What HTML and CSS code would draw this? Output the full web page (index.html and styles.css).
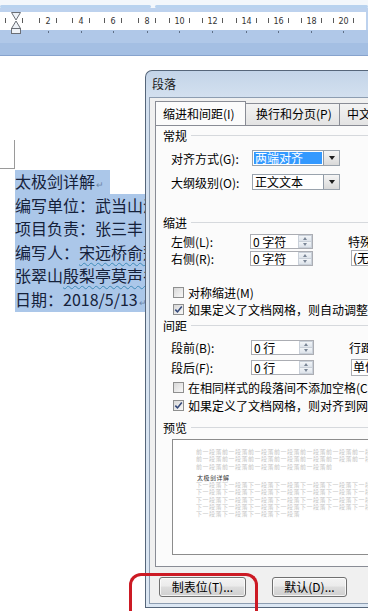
FILE: index.html
```html
<!DOCTYPE html>
<html lang="zh-CN">
<head>
<meta charset="utf-8">
<title>段落</title>
<link rel="stylesheet" href="styles.css">
</head>
<body>
<header class="ruler-bar">
  <div class="ruler-top"><span class="seg left"></span><span class="seg right"></span></div>
  <svg class="ruler" width="368" height="48" viewBox="0 8 368 48" xmlns="http://www.w3.org/2000/svg">
    <rect x="0" y="8" width="368" height="4" fill="#bdd2ee"/>
    <rect x="0" y="30" width="368" height="13" fill="#b0c8e8"/>
    <rect x="0" y="43" width="368" height="12" fill="#a4bfe3"/>
    <line x1="0" y1="55.5" x2="368" y2="55.5" stroke="#87a3cd"/>
    <rect x="0" y="12" width="366" height="18" fill="#ffffff"/>
    <rect x="366" y="12" width="2" height="18" fill="#bdd2ee"/>
    <g stroke="#5a5a5a" stroke-width="1">
      <line x1="5.5" y1="18" x2="5.5" y2="23"/>
      <line x1="22.5" y1="18" x2="22.5" y2="23"/>
      <line x1="39.5" y1="18" x2="39.5" y2="23"/><line x1="56.5" y1="18" x2="56.5" y2="23"/>
      <line x1="72.5" y1="18" x2="72.5" y2="23"/><line x1="89.5" y1="18" x2="89.5" y2="23"/>
      <line x1="104.5" y1="18" x2="104.5" y2="23"/><line x1="121.5" y1="18" x2="121.5" y2="23"/>
      <line x1="138.5" y1="18" x2="138.5" y2="23"/><line x1="155.5" y1="18" x2="155.5" y2="23"/>
      <line x1="169.5" y1="18" x2="169.5" y2="23"/><line x1="189.5" y1="18" x2="189.5" y2="23"/>
      <line x1="202.5" y1="18" x2="202.5" y2="23"/><line x1="222.5" y1="18" x2="222.5" y2="23"/>
      <line x1="236.5" y1="18" x2="236.5" y2="23"/><line x1="256.5" y1="18" x2="256.5" y2="23"/>
      <line x1="268.5" y1="18" x2="268.5" y2="23"/><line x1="288.5" y1="18" x2="288.5" y2="23"/>
      <line x1="301.5" y1="18" x2="301.5" y2="23"/><line x1="321.5" y1="18" x2="321.5" y2="23"/>
      <line x1="333.5" y1="18" x2="333.5" y2="23"/><line x1="353.5" y1="18" x2="353.5" y2="23"/>
    </g>
    <g stroke="#5f6f86" stroke-width="1">
      <line x1="48.5" y1="31" x2="48.5" y2="33"/><line x1="81.5" y1="31" x2="81.5" y2="33"/>
      <line x1="113.5" y1="31" x2="113.5" y2="33"/><line x1="147.5" y1="31" x2="147.5" y2="33"/>
      <line x1="179.5" y1="31" x2="179.5" y2="33"/><line x1="212.5" y1="31" x2="212.5" y2="33"/>
      <line x1="246.5" y1="31" x2="246.5" y2="33"/><line x1="278.5" y1="31" x2="278.5" y2="33"/>
      <line x1="311.5" y1="31" x2="311.5" y2="33"/><line x1="343.5" y1="31" x2="343.5" y2="33"/>
    </g>
    <g class="ruler-num" fill="#333" font-size="8" text-anchor="middle">
      <text x="48" y="23.5">2</text><text x="81" y="23.5">4</text><text x="113" y="23.5">6</text>
      <text x="147" y="23.5">8</text><text x="179.5" y="23.5">10</text><text x="212.5" y="23.5">12</text>
      <text x="246.5" y="23.5">14</text><text x="278.5" y="23.5">16</text><text x="311.5" y="23.5">18</text>
      <text x="343.5" y="23.5">20</text>
    </g>
    <g fill="#eef2f7" stroke="#6b6f76" stroke-width="1">
      <path d="M11.5 12.5 H20.5 L16 20 Z"/>
      <path d="M16 21 L20.5 28.5 H11.5 Z"/>
      <rect x="11.5" y="28.5" width="9" height="5"/>
    </g>
  </svg>
</header>

<main class="page">
  <div class="text-block">
    <div class="line"><span>太极剑详解</span><span class="pmark">↵</span></div>
    <div class="line">编写单位：武当山派</div>
    <div class="line">项目负责：张三丰</div>
    <div class="line">编写人：<span class="squiggle">宋远桥俞莲舟</span></div>
    <div class="line">张翠山<span class="squiggle">殷梨亭莫声谷</span></div>
    <div class="line">日期：2018/5/13<span class="pmark">↵</span></div>
  </div>
</main>

<section class="dialog">
  <div class="title">段落</div>
  <div class="client">
    <div class="tabs">
      <div class="tab active">缩进和间距(I)</div>
      <div class="tab second">换行和分页(P)</div>
      <div class="tab third">中文版式(H)</div>
    </div>
    <div class="panel">
      <div class="group-head">常规</div>
      <div class="field gap-6">
        <span class="label wide">对齐方式(G):</span>
        <div class="select"><span class="value selected">两端对齐</span><span class="arrow"></span></div>
      </div>
      <div class="field gap-8">
        <span class="label wide">大纲级别(O):</span>
        <div class="select"><span class="value">正文文本</span><span class="arrow"></span></div>
      </div>

      <div class="group-head gap-23">缩进</div>
      <div class="field gap-2">
        <span class="label narrow">左侧(L):</span>
        <div class="spin"><span class="value">0 字符</span><span class="btns"><i class="up"></i><i class="down"></i></span></div>
        <span class="side-label">特殊格式(S):</span>
      </div>
      <div class="field gap-1">
        <span class="label narrow">右侧(R):</span>
        <div class="spin"><span class="value">0 字符</span><span class="btns"><i class="up"></i><i class="down"></i></span></div>
        <div class="side-select"><span class="value">(无)</span></div>
      </div>

      <div class="check gap-18"><span class="box"></span>对称缩进(M)</div>
      <div class="check gap-1"><span class="box checked"><svg width="9" height="9" viewBox="0 0 9 9"><path d="M1.3 4.6 L3.5 6.9 L7.8 1.6" fill="none" stroke="#34497a" stroke-width="1.6"/></svg></span>如果定义了文档网格，则自动调整右缩进(D)</div>

      <div class="group-head short">间距</div>
      <div class="field gap-6">
        <span class="label">段前(B):</span>
        <div class="spin"><span class="value">0 行</span><span class="btns"><i class="up"></i><i class="down"></i></span></div>
        <span class="side-label">行距(N):</span>
      </div>
      <div class="field gap-4">
        <span class="label">段后(F):</span>
        <div class="spin"><span class="value">0 行</span><span class="btns"><i class="up"></i><i class="down"></i></span></div>
        <div class="side-select tall"><span class="value">单倍行距</span></div>
      </div>

      <div class="check gap-4"><span class="box"></span>在相同样式的段落间不添加空格(C)</div>
      <div class="check gap-2"><span class="box checked"><svg width="9" height="9" viewBox="0 0 9 9"><path d="M1.3 4.6 L3.5 6.9 L7.8 1.6" fill="none" stroke="#34497a" stroke-width="1.6"/></svg></span>如果定义了文档网格，则对齐到网格(W)</div>

      <div class="group-head gap-5">预览</div>
      <div class="preview">
        <div class="pv-line">前一段落前一段落前一段落前一段落前一段落前一段落前一段落前一段落</div>
        <div class="pv-line">前一段落前一段落前一段落前一段落前一段落前一段落前一段落前一段落</div>
        <div class="pv-line">前一段落前一段落前一段落前一段落前一段落前</div>
        <div class="pv-line current">太极剑详解</div>
        <div class="pv-line">下一段落下一段落下一段落下一段落下一段落下一段落下一段落下一段落</div>
        <div class="pv-line">下一段落下一段落下一段落下一段落下一段落下一段落下一段落下一段落</div>
        <div class="pv-line">下一段落下一段落下一段落下一段落下一段落下一段落下一段落下一段落</div>
        <div class="pv-line">下一段落下一段落下一段落下一段落下一段落下一段落下一段落下一段落</div>
        <div class="pv-line">下一段落下一段落下一段落下一段落</div>
      </div>
    </div>
    <div class="actions">
      <button class="btn tabs-btn">制表位(T)...</button>
      <button class="btn default-btn">默认(D)...</button>
      <button class="btn ok-btn">确定</button>
    </div>
  </div>
</section>

<div class="annotation"></div>
</body>
</html>
```

FILE: styles.css
```css
body {
  margin: 0;
  width: 368px;
  height: 611px;
  overflow: hidden;
  position: relative;
  background: #ffffff;
  font-family: "Noto Sans CJK SC", "Noto Sans", sans-serif;
}

.ruler-bar {
  height: 56px;
  background: #f3f7fb;
}

.ruler-top {
  height: 8px;
  box-sizing: border-box;
  padding-top: 5px;
  display: flex;
  gap: 4px;
}

.ruler-top .seg {
  height: 3px;
  border-radius: 1.5px;
  background: #b9d3ef;
}

.ruler-top .left {
  width: 151px;
}

.ruler-top .right {
  flex: 1;
}

.ruler {
  display: block;
}

.ruler-num {
  font-family: "DejaVu Sans", "Liberation Sans", sans-serif;
}

/* document page */
.page {
  padding: 114px 0 0 15px;
  width: 130px;
  overflow: hidden;
}

.text-block {
  position: relative;
}

.text-block::before {
  content: "";
  position: absolute;
  left: -16px;
  top: -30px;
  width: 15px;
  height: 28px;
  border-right: 1px solid #9a9a9a;
  border-bottom: 1px solid #9a9a9a;
}

.line {
  width: max-content;
  height: 23.6px;
  line-height: 23.6px;
  font-size: 16px;
  color: #15213a;
  background: #abc7e9;
  white-space: nowrap;
  padding-right: 6px;
}

.pmark {
  font-size: 9px;
  color: #6d86a8;
  margin-left: 1px;
}

.squiggle {
  text-decoration: underline wavy #3f8bb8;
  text-decoration-thickness: 1px;
  text-underline-offset: 3px;
}

/* dialog window */
.dialog {
  position: absolute;
  left: 145px;
  top: 70px;
  width: 223px;
  height: 538px;
  box-sizing: border-box;
  border: 1px solid #56667a;
  border-right: none;
  border-radius: 7px 0 0 0;
  padding: 0 0 3px 3px;
  background: linear-gradient(#c3d4e8, #d3e0ef 26px, #dce7f3);
  display: flex;
  flex-direction: column;
  overflow: hidden;
  font-size: 12px;
  color: #000;
}

.title {
  height: 26px;
  line-height: 26px;
  padding-left: 3px;
  color: #1b1b1b;
  flex: none;
}

.client {
  flex: 1;
  min-width: 0;
  background: #f0f0f0;
  border: 1px solid #8d9db1;
  border-right: none;
  padding: 3px 0 0 5px;
  display: flex;
  flex-direction: column;
  overflow: hidden;
}

.tabs {
  display: flex;
  height: 24px;
  position: relative;
  z-index: 1;
  flex: none;
  overflow: hidden;
}

.tab {
  height: 22px;
  margin-top: 2px;
  box-sizing: border-box;
  border: 1px solid #898c95;
  border-left: none;
  border-bottom: none;
  background: linear-gradient(#f3f3f3, #e3e3e3);
  line-height: 20px;
  white-space: nowrap;
  flex: none;
  overflow: hidden;
}

.tab.active {
  width: 91px;
  height: 25px;
  margin-top: 0;
  border-left: 1px solid #898c95;
  background: #fbfbfb;
  line-height: 24px;
  padding-left: 7px;
}

.tab.second {
  width: 94px;
  padding-left: 10px;
}

.tab.third {
  width: 60px;
  padding-left: 7px;
}

.panel {
  border: 1px solid #898c95;
  border-right: none;
  background: #fbfbfb;
  padding: 0 0 11px 7px;
  flex: none;
  overflow: hidden;
}

.group-head {
  display: flex;
  align-items: center;
  height: 18px;
  white-space: nowrap;
}

.group-head.short {
  height: 16px;
}

.group-head::after {
  content: "";
  flex: 1;
  height: 0;
  border-top: 1px solid #d6d9dd;
  margin-left: 4px;
}

.field {
  display: flex;
  align-items: center;
  height: 16px;
  padding-left: 8px;
  white-space: nowrap;
}

.label {
  width: 80px;
  flex: none;
}

.label.wide {
  width: 81px;
}

.label.narrow {
  width: 79px;
}

.select {
  width: 88px;
  height: 16px;
  box-sizing: border-box;
  border: 1px solid #9aa3ad;
  background: #fff;
  display: flex;
  flex: none;
}

.select .value {
  flex: 1;
  padding-left: 2px;
  line-height: 14px;
}

.select .value.selected {
  margin: 1px;
  padding-left: 1px;
  line-height: 12px;
  background: #3399ff;
  color: #fff;
}

.select .arrow {
  width: 15px;
  border-left: 1px solid #8f99a5;
  background: linear-gradient(#f5f5f5, #d9d9d9);
  display: flex;
  align-items: center;
  justify-content: center;
}

.select .arrow::before {
  content: "";
  border-left: 3.5px solid transparent;
  border-right: 3.5px solid transparent;
  border-top: 4px solid #1e1e1e;
}

.spin {
  width: 63px;
  height: 15px;
  box-sizing: border-box;
  border: 1px solid #abadb3;
  background: #fff;
  display: flex;
  flex: none;
}

.spin .value {
  flex: 1;
  padding-left: 2px;
  line-height: 13px;
}

.spin .btns {
  width: 14px;
  display: flex;
  flex-direction: column;
}

.spin .btns i {
  flex: 1;
  border: 1px solid #c9d0d9;
  background: linear-gradient(#f2f5f8, #dde3ea);
  display: flex;
  align-items: center;
  justify-content: center;
}

.spin .btns i + i {
  border-top: none;
}

.spin .up::before {
  content: "";
  border-left: 2.5px solid transparent;
  border-right: 2.5px solid transparent;
  border-bottom: 3px solid #7a8696;
}

.spin .down::before {
  content: "";
  border-left: 2.5px solid transparent;
  border-right: 2.5px solid transparent;
  border-top: 3px solid #7a8696;
}

.side-label {
  margin-left: 35px;
}

.side-select {
  margin-left: 38px;
  width: 80px;
  height: 16px;
  box-sizing: border-box;
  border: 1px solid #abadb3;
  background: #fff;
  flex: none;
}

.side-select.tall {
  margin-left: 37px;
  height: 17px;
}

.side-select .value {
  display: block;
  padding-left: 1px;
  line-height: 14px;
}

.check {
  display: flex;
  align-items: center;
  height: 16px;
  padding-left: 10px;
  white-space: nowrap;
}

.box {
  width: 11px;
  height: 11px;
  box-sizing: border-box;
  border: 1px solid #8e8f8f;
  background: linear-gradient(135deg, #d8d8d8, #f8f8f8);
  margin-right: 4px;
  flex: none;
  display: flex;
  align-items: center;
  justify-content: center;
}

.box svg {
  display: block;
}

.preview {
  margin: 3px 0 0 9px;
  height: 116px;
  box-sizing: border-box;
  border: 1px solid #8c8c8c;
  border-right: none;
  background: #fff;
  padding: 8px 0 0 23px;
  font-size: 6px;
  line-height: 7.3px;
  color: #c6c6c6;
  white-space: nowrap;
  overflow: hidden;
}

.pv-line {
  height: 7.3px;
  letter-spacing: 0.5px;
}

.pv-line.current {
  color: #333;
  margin: 4px 0 0 1px;
}

.actions {
  display: flex;
  margin-top: 10px;
  padding-left: 4px;
  flex: none;
  overflow: hidden;
}

.btn {
  height: 20px;
  box-sizing: border-box;
  padding: 0;
  border: 1px solid #707070;
  border-radius: 3px;
  background: linear-gradient(#f3f3f3 0%, #ebebeb 45%, #dddddd 50%, #cfcfcf 100%);
  box-shadow: inset 0 0 0 1px rgba(255, 255, 255, 0.75);
  font-family: inherit;
  font-size: 12px;
  line-height: 18px;
  color: #000;
  text-align: center;
  flex: none;
  overflow: hidden;
}

.tabs-btn {
  width: 87px;
}

.default-btn {
  width: 75px;
  margin-left: 26px;
}

.ok-btn {
  width: 75px;
  margin-left: 23px;
}

.gap-1 { margin-top: 1px; }
.gap-2 { margin-top: 2px; }
.gap-4 { margin-top: 4px; }
.gap-5 { margin-top: 5px; }
.gap-6 { margin-top: 6px; }
.gap-8 { margin-top: 8px; }
.gap-18 { margin-top: 18px; }
.gap-23 { margin-top: 23px; }

/* red annotation drawn over the screenshot */
.annotation {
  position: absolute;
  left: 129px;
  top: 573px;
  width: 129px;
  height: 38px;
  box-sizing: border-box;
  border: 3px solid #cc1a24;
  border-bottom: none;
  border-radius: 12px 12px 0 0;
}
```
